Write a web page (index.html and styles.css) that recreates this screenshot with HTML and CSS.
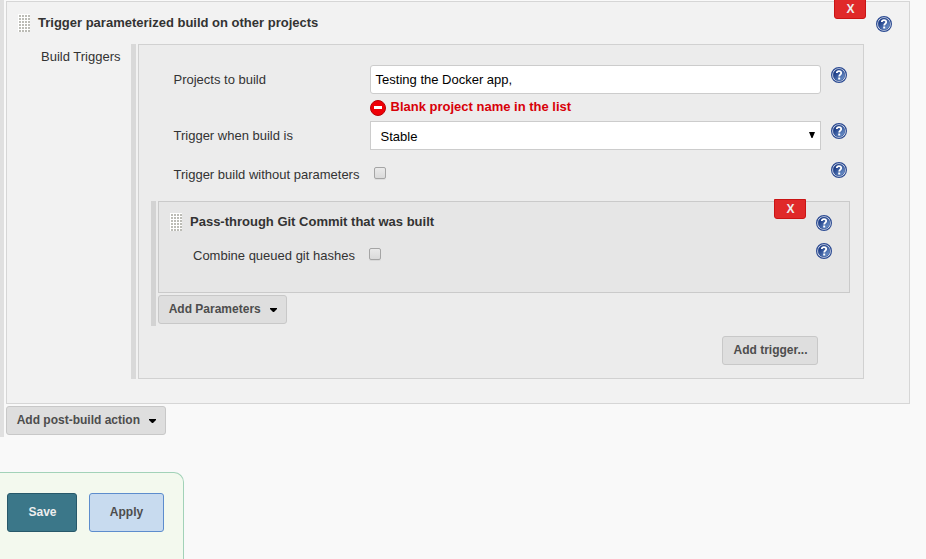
FILE: index.html
```html
<!DOCTYPE html>
<html lang="en">
<head>
<meta charset="utf-8">
<title>Post-build Actions</title>
<link rel="stylesheet" href="styles.css">
</head>
<body>
<svg class="defs" width="0" height="0" aria-hidden="true">
  <defs>
    <linearGradient id="blue" x1="0" y1="0" x2="1" y2="1">
      <stop offset="0.25" stop-color="#1f3f88"/>
      <stop offset="1" stop-color="#7da3d8"/>
    </linearGradient>
    <symbol id="help" viewBox="0 0 16 16">
      <circle cx="8" cy="8" r="7.4" fill="#fff" stroke="#2b4a92" stroke-width="1.2"/>
      <circle cx="8" cy="8" r="5.9" fill="url(#blue)" stroke="#23458c" stroke-width=".6"/>
      <path d="M5.8 6.1C5.8 3.4 10.2 3.4 10.2 5.9C10.2 7.6 8.2 7.7 8.2 9.6" fill="none" stroke="#fff" stroke-width="1.8"/>
      <rect x="7.2" y="10.5" width="2" height="2" fill="#fff"/>
    </symbol>
  </defs>
</svg>
<main>
  <section class="chunk outer">
    <div class="panel post-build">
      <button class="delete">X</button>
      <header class="panel-head">
        <span class="handle"></span>
        <h2>Trigger parameterized build on other projects</h2>
        <svg class="help"><use href="#help"/></svg>
      </header>
      <div class="trigger-row">
        <div class="section-label">Build Triggers</div>
        <div class="chunk triggers">
          <div class="panel trigger">
            <div class="row projects">
              <label>Projects to build</label>
              <div class="field">Testing the Docker app,</div>
              <svg class="help"><use href="#help"/></svg>
            </div>
            <div class="error">
              <svg width="16" height="16" viewBox="0 0 16 16"><circle cx="8" cy="8" r="7.5" fill="#ef0007" stroke="#b80006"/><rect x="4" y="6" width="8" height="3" fill="#fff"/></svg>
              <span>Blank project name in the list</span>
            </div>
            <div class="row condition">
              <label>Trigger when build is</label>
              <div class="field select">Stable<svg width="6" height="6" viewBox="0 0 6 6"><path d="M0 0H6L3.5 6H2.5Z"/></svg></div>
              <svg class="help"><use href="#help"/></svg>
            </div>
            <div class="row without">
              <label>Trigger build without parameters</label>
              <span class="check"></span>
              <svg class="help"><use href="#help"/></svg>
            </div>
            <div class="chunk params">
              <div class="panel param">
                <button class="delete">X</button>
                <header class="panel-head">
                  <span class="handle"></span>
                  <h2>Pass-through Git Commit that was built</h2>
                  <svg class="help"><use href="#help"/></svg>
                </header>
                <div class="combine">
                  <label>Combine queued git hashes</label>
                  <span class="check"></span>
                  <svg class="help"><use href="#help"/></svg>
                </div>
              </div>
              <button class="btn">Add Parameters<svg class="caret" viewBox="0 0 7 4"><path d="M0 0H7V1L4 4H3L0 1Z"/></svg></button>
            </div>
            <button class="btn add-trigger">Add trigger...</button>
          </div>
        </div>
      </div>
    </div>
    <button class="btn">Add post-build action<svg class="caret" viewBox="0 0 7 4"><path d="M0 0H7V1L4 4H3L0 1Z"/></svg></button>
  </section>
  <footer class="save-bar">
    <button class="save">Save</button>
    <button class="apply">Apply</button>
  </footer>
</main>
</body>
</html>
```
FILE: styles.css
```css
* { box-sizing: border-box; }
body {
  margin: 0;
  height: 559px;
  overflow: hidden;
  background: #f9f9f9;
  color: #333;
  font: 13px/18px "Liberation Sans", Arial, sans-serif;
}
main { display: flex; flex-direction: column; height: 559px; }
svg { display: block; flex: none; }
.defs { position: absolute; }
button { font: bold 12px/16px "Liberation Sans", Arial, sans-serif; }
h2 { margin: 0; font-size: 13px; line-height: 18px; }

.chunk { padding-left: 2px; border-left: 5px solid #d9d9d9; }
.panel { position: relative; border: 1px solid #d1d1d1; }
.outer { width: 910px; height: 437px; padding-top: 1px; border-left: 4px solid #e0e0e0; }
.post-build { height: 403px; background: #f2f2f2; border-color: #d6d6d6; }
.panel-head { display: flex; height: 42px; padding: 12px 17px 0 11px; }
.panel-head h2 { flex: 1; margin-left: 8px; }
.panel-head .help { margin-top: 2px; }
.handle {
  width: 12px;
  height: 18px;
  background: conic-gradient(from 90deg at 1px 1px, #bcbcb6 90deg, #fff 0) 0 0 / 3px 3px;
}
.help { width: 16px; height: 16px; }
.delete {
  position: absolute;
  top: -3px;
  right: 43px;
  width: 32px;
  height: 20px;
  padding: 0 0 0 1px;
  border: 1px solid #c91414;
  border-radius: 0 0 3px 3px;
  background: #e02929;
  color: #eee;
  line-height: 18px;
}

.trigger-row { display: flex; }
.section-label { width: 124px; padding: 4px 0 0 34px; white-space: nowrap; }
.triggers { width: 733px; height: 335px; }
.trigger { height: 335px; padding: 20px 13px 0 12px; background: #ececec; }
.row { display: flex; padding-left: 22.5px; }
.row label { width: 196.5px; flex: none; white-space: nowrap; }
.projects, .condition { height: 29px; }
.projects label, .condition label { padding-top: 6px; }
.field {
  width: 451px;
  height: 29px;
  padding: 0 4.6px;
  border: 1px solid #ccc;
  border-radius: 3px;
  background: #fff;
  color: #000;
  line-height: 28px;
}
.row .help { margin: 2px 0 0 10px; }
.select { display: flex; justify-content: space-between; padding: 1px 5px 0 9.5px; border-radius: 0; }
.select svg { margin: 9px 0 0; }
.error {
  display: flex;
  height: 27px;
  padding: 4px 0 0 219px;
  color: #d80008;
  font-weight: bold;
}
.error svg { margin: 2px 4.5px 0 0; }
.without { height: 51px; padding-top: 16px; }
.without .help { margin: -4px 0 0 445px; }
.check {
  width: 12px;
  height: 12px;
  margin-top: 1px;
  border: 1px solid #a5a5a5;
  border-radius: 2px;
  background: linear-gradient(#eaeaea, #dadada);
  box-shadow: 0 1px 0 rgba(0, 0, 0, .06);
}
.without .check { margin-left: 4px; }

.params { width: 699px; height: 125px; border-left-color: #d3d3d3; }
.param { height: 92px; background: #e6e6e6; border-color: #cacaca; }
.param .panel-head { padding-top: 11px; }
.combine { display: flex; padding: 3px 17px 0 34px; }
.combine .check { margin: 1px 0 0 14px; }
.combine .help { margin: -4px 0 0 auto; }

.btn {
  display: flex;
  align-items: center;
  height: 29px;
  margin-top: 2px;
  padding: 0 9px 2px 9.7px;
  border: 1px solid #c8c8c8;
  border-radius: 3px;
  background: #dedede;
  color: #4d4d4d;
  white-space: nowrap;
}
.caret { width: 7px; height: 4px; margin: 3px 0 0 9.3px; }
.add-trigger { width: 96px; margin: 10px 32px 0 auto; justify-content: center; padding: 0 0 2px 1px; }

.save-bar {
  display: flex;
  gap: 12px;
  width: 184px;
  height: 87px;
  margin-top: 35px;
  padding: 20px 0 0 7px;
  border: 1px solid #a2d2b8;
  border-width: 1px 1px 0 0;
  border-radius: 0 10px 0 0;
  background: #f3f9ee;
}
.save, .apply { width: 70px; height: 39px; padding: 0 0 2px 1px; border: 1px solid #27596a; border-radius: 3px; background: #3b7789; color: #eee; }
.apply { width: 75px; padding-left: 0; border-color: #5d8dcd; background: #c8dbef; color: #4d4d4d; }
```
